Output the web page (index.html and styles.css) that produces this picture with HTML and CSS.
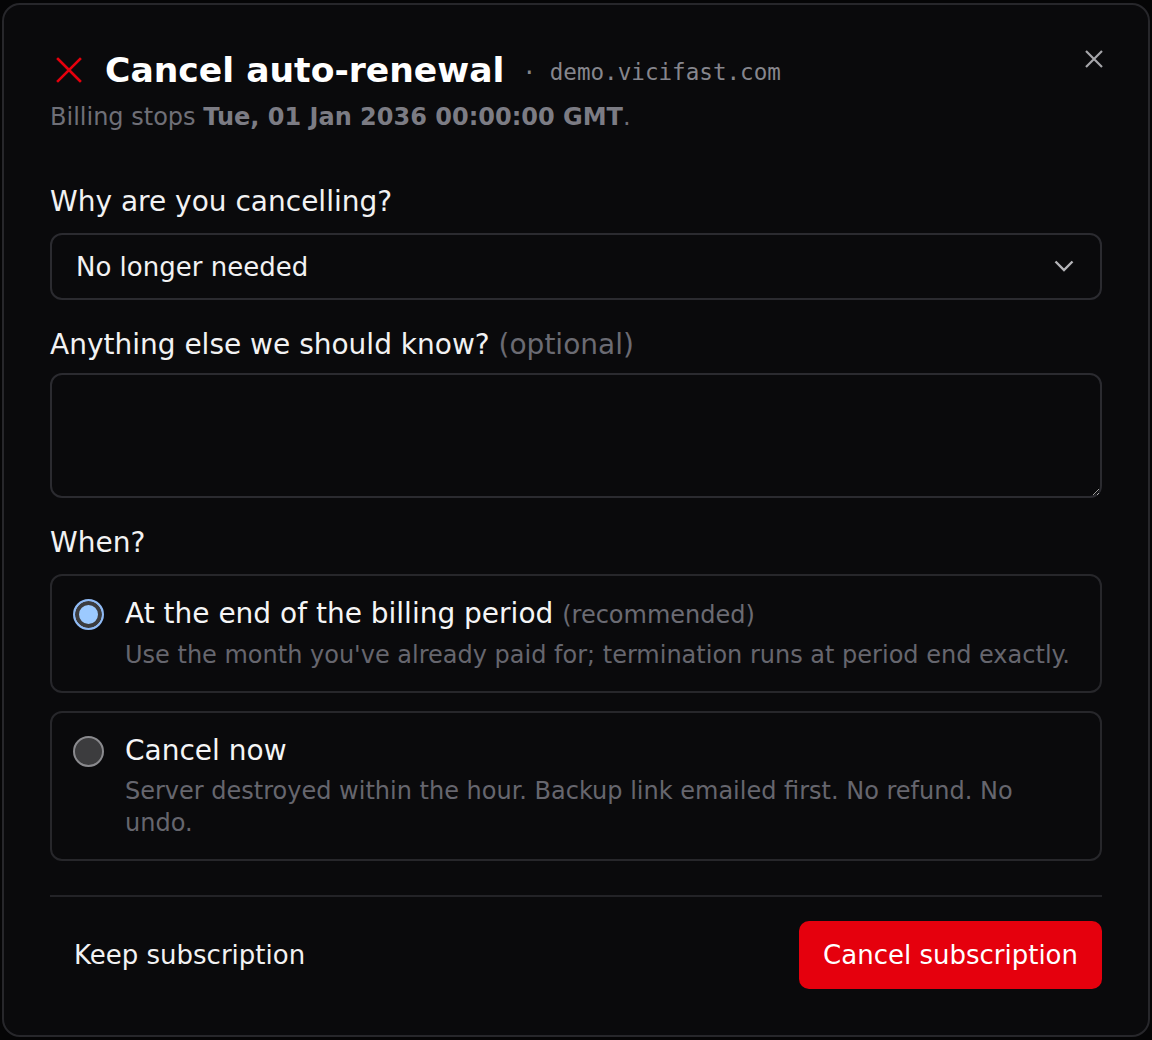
FILE: index.html
```html
<!DOCTYPE html>
<html>
<head>
  <title>Cancel auto-renewal</title>
  <link rel="stylesheet" href="styles.css">
</head>
<body>

<div class="modal">
  <div class="modal-head">
    <div class="title-row">
      <svg class="title-icon" width="26" height="26" viewBox="0 0 26 26">
        <path d="M2 2 L24 24 M24 2 L2 24" stroke="#e5000d" stroke-width="2.6" stroke-linecap="square"/>
      </svg>
      <h2>Cancel auto-renewal</h2>
      <span class="host">&middot; demo.vicifast.com</span>
    </div>
    <p class="subtitle">Billing stops <b>Tue, 01 Jan 2036 00:00:00 GMT</b>.</p>
    <button class="close" type="button" aria-label="Close">
      <svg width="20" height="20" viewBox="0 0 20 20">
        <path d="M2 2 L18 18 M18 2 L2 18" stroke="#a6a6aa" stroke-width="2.2"/>
      </svg>
    </button>
  </div>

  <form class="cancel-form">
    <label class="field-label" for="reason">Why are you cancelling?</label>
    <div class="select-wrap">
      <select id="reason" name="reason">
        <option selected>No longer needed</option>
        <option>Too expensive</option>
        <option>Switching provider</option>
        <option>Other</option>
      </select>
      <svg class="chevron" width="20" height="12" viewBox="0 0 20 12">
        <path d="M1.5 1.5 L10 10 L18.5 1.5" fill="none" stroke="#b4b4b8" stroke-width="2.4"/>
      </svg>
    </div>

    <label class="field-label label-notes" for="notes">Anything else we should know? <span class="optional">(optional)</span></label>
    <textarea id="notes" name="notes"></textarea>

    <div class="field-label label-when">When?</div>
    <label class="option">
      <input type="radio" name="when" value="period" checked>
      <span class="option-text">
        <span class="option-title">At the end of the billing period <span class="hint">(recommended)</span></span>
        <span class="option-desc">Use the month you've already paid for; termination runs at period end exactly.</span>
      </span>
    </label>
    <label class="option">
      <input type="radio" name="when" value="now">
      <span class="option-text">
        <span class="option-title">Cancel now</span>
        <span class="option-desc">Server destroyed within the hour. Backup link emailed first. No refund. No undo.</span>
      </span>
    </label>

    <div class="modal-foot">
      <button type="button" class="btn-ghost">Keep subscription</button>
      <button type="submit" class="btn-danger">Cancel subscription</button>
    </div>
  </form>
</div>

</body>
</html>
```

FILE: styles.css
```css
body {
  margin: 0;
  background-color: #050506;
  font-family: "DejaVu Sans", Verdana, sans-serif;
  color: #f2f2f3;
  color-scheme: dark;
}

.modal {
  margin: 3px 2px 0;
  height: 1034px;
  box-sizing: border-box;
  background-color: #0a0a0c;
  border: 2px solid #27272b;
  border-radius: 18px;
  padding: 44px 46px 46px;
}

.modal-head {
  position: relative;
}

.title-row {
  display: flex;
  align-items: center;
  height: 42px;
}

.title-icon {
  margin: 0 23px 0 6px;
}

.title-row h2 {
  margin: 0;
  font-size: 34.6px;
  font-weight: bold;
  color: #fff;
}

.host {
  margin-left: 18px;
  margin-top: 4px;
  font-family: "DejaVu Sans Mono", monospace;
  font-size: 22.6px;
  color: #86868d;
}

.subtitle {
  margin: 10px 0 0;
  font-size: 24px;
  line-height: 32px;
  color: #6f6f77;
}

.subtitle b {
  color: #7c7c84;
}

.close {
  position: absolute;
  top: 0;
  right: -2px;
  padding: 0;
  border: none;
  background: none;
  cursor: pointer;
}

.cancel-form {
  margin-top: 51px;
}

.field-label {
  display: block;
  font-size: 28px;
  line-height: 36px;
  margin-bottom: 13px;
}

.optional {
  color: #6b6b73;
}

.label-notes {
  margin-top: 27px;
  margin-bottom: 10px;
}

.label-when {
  margin-top: 27px;
  margin-bottom: 13px;
}

.select-wrap {
  position: relative;
}

select {
  display: block;
  width: 100%;
  height: 67px;
  padding: 0 24px;
  box-sizing: border-box;
  appearance: none;
  background-color: #0a0a0c;
  color: #f2f2f3;
  border: 2px solid #2b2b30;
  border-radius: 12px;
  font-family: inherit;
  font-size: 26px;
}

.chevron {
  position: absolute;
  right: 28px;
  top: 27px;
  pointer-events: none;
}

textarea {
  display: block;
  width: 100%;
  height: 125px;
  box-sizing: border-box;
  padding: 14px 24px;
  background-color: #0a0a0c;
  color: #f2f2f3;
  border: 2px solid #2b2b30;
  border-radius: 12px;
  font-family: inherit;
  font-size: 26px;
  resize: vertical;
}

.option {
  display: flex;
  gap: 21px;
  padding: 20px 22px 20px 21px;
  margin-bottom: 18px;
  border: 2px solid #27272b;
  border-radius: 12px;
  cursor: pointer;
}

.option input {
  appearance: none;
  flex: none;
  width: 31px;
  height: 31px;
  margin: 3px 0 0;
  border-radius: 50%;
  border: 2px solid #8a8a8e;
  background-color: #3c3c3e;
  box-sizing: border-box;
}

.option input:checked {
  border-color: #8fbaf5;
  background-color: #9ccaff;
  box-shadow: inset 0 0 0 4px #3c3c3e;
}

.option-text {
  display: flex;
  flex-direction: column;
}

.option-title {
  font-size: 28px;
  line-height: 36px;
  color: #f5f5f6;
}

.hint {
  font-size: 24px;
  color: #6b6b73;
}

.option-desc {
  margin-top: 6px;
  font-size: 24px;
  line-height: 32px;
  color: #66666e;
}

.modal-foot {
  display: flex;
  justify-content: space-between;
  align-items: center;
  margin-top: 34px;
  padding-top: 24px;
  border-top: 2px solid #232327;
}

.modal-foot button {
  height: 68px;
  padding: 0 24px;
  border: none;
  border-radius: 10px;
  font-family: inherit;
  font-size: 26px;
  cursor: pointer;
}

.btn-ghost {
  background: none;
  color: #f2f2f3;
}

.btn-danger {
  background-color: #e5000d;
  color: #fff;
}
```
